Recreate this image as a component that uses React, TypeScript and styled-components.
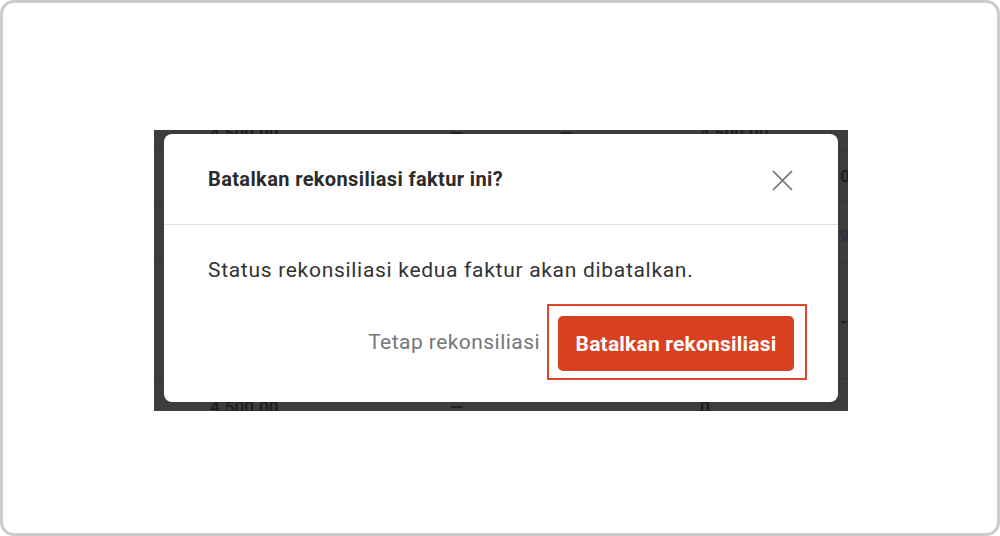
import React from 'react';
import styled, { createGlobalStyle } from 'styled-components';

const GlobalStyle = createGlobalStyle`
  html, body {
    margin: 0;
    padding: 0;
    background: #fff;
  }
  body {
    font-family: Roboto, "Liberation Sans", Arial, sans-serif;
  }
`;

const Frame = styled.div`
  box-sizing: border-box;
  width: 1000px;
  height: 536px;
  border: 3px solid #cbcbcb;
  border-radius: 14px;
  background: #fff;
  display: flex;
  justify-content: center;
  align-items: flex-start;
  padding: 127px 0 0 2px;
`;

const Shot = styled.div`
  position: relative;
  width: 694px;
  height: 281px;
  background: #3d3d3d;
  overflow: hidden;
`;

const BgTable = styled.div`
  display: flex;
  flex-direction: column;
  margin-top: -14px;
`;

const BgRow = styled.div<{ $h: number }>`
  display: grid;
  grid-template-columns: 56px 240px 110px 140px 148px;
  height: ${(p) => p.$h}px;
  align-items: center;
  border-bottom: 1px solid #353535;
  font-size: 17px;
  font-weight: 700;
`;

const BgCell = styled.span<{ $muted?: boolean }>`
  color: ${(p) => (p.$muted ? '#2a3140' : '#1f1f1f')};
  white-space: nowrap;
`;

const EdgeCell = styled(BgCell)`
  padding-left: 140px;
`;

const Modal = styled.div`
  position: absolute;
  top: 4px;
  left: 10px;
  width: 674px;
  height: 268px;
  background: #fff;
  border-radius: 8px;
  display: flex;
  flex-direction: column;
`;

const Header = styled.div`
  height: 90px;
  padding: 0 45px 0 44px;
  display: flex;
  align-items: center;
  justify-content: space-between;
  border-bottom: 1px solid #e3e3e3;
`;

const Title = styled.h2`
  margin: 0;
  font-size: 20px;
  font-weight: 700;
  color: #2b2b2b;
  letter-spacing: 0.37px;
`;

const CloseButton = styled.button`
  border: none;
  background: none;
  padding: 0;
  width: 22px;
  height: 22px;
  display: flex;
  align-items: center;
  justify-content: center;
  cursor: pointer;
  margin-top: 2px;
`;

const Body = styled.div`
  padding: 33px 44px 22px;
  display: flex;
  flex-direction: column;
  gap: 22px;
`;

const Message = styled.p`
  margin: 0;
  font-size: 21px;
  line-height: 24px;
  color: #333;
  letter-spacing: 0.7px;
`;

const Footer = styled.div`
  display: flex;
  justify-content: flex-end;
  align-items: center;
  gap: 7px;
  margin-right: -13px;
`;

const GhostButton = styled.button`
  border: none;
  background: none;
  padding: 0;
  font-family: inherit;
  font-size: 21px;
  color: #777;
  letter-spacing: 0.45px;
  cursor: pointer;
`;

const Highlight = styled.div`
  border: 2px solid #e2462a;
  padding: 10px 11px 7px 9px;
  display: flex;
`;

const DangerButton = styled.button`
  width: 236px;
  height: 55px;
  border: none;
  border-radius: 5px;
  background: #d9401f;
  color: #fff;
  font-family: inherit;
  font-size: 21px;
  font-weight: 700;
  letter-spacing: 0.2px;
  cursor: pointer;
`;

const CloseIcon = () => (
  <svg width="21" height="21" viewBox="0 0 21 21" fill="none">
    <path d="M1 1 20 20M20 1 1 20" stroke="#6f6f6f" strokeWidth="1.7" />
  </svg>
);

const App: React.FC = () => (
  <>
    <GlobalStyle />
    <Frame>
      <Shot>
        <BgTable>
          <BgRow $h={34}>
            <BgCell />
            <BgCell>4.500.00</BgCell>
            <BgCell>—</BgCell>
            <BgCell>—</BgCell>
            <BgCell>4.500.00</BgCell>
          </BgRow>
          <BgRow $h={50}>
            <BgCell />
            <BgCell />
            <BgCell />
            <BgCell />
            <EdgeCell>0.</EdgeCell>
          </BgRow>
          <BgRow $h={60}>
            <BgCell />
            <BgCell />
            <BgCell />
            <BgCell />
            <EdgeCell $muted>g</EdgeCell>
          </BgRow>
          <BgRow $h={115}>
            <BgCell />
            <BgCell />
            <BgCell />
            <BgCell />
            <EdgeCell>-0</EdgeCell>
          </BgRow>
          <BgRow $h={56}>
            <BgCell />
            <BgCell>4.500.00</BgCell>
            <BgCell>—</BgCell>
            <BgCell />
            <BgCell>0</BgCell>
          </BgRow>
        </BgTable>
        <Modal role="dialog" aria-modal="true">
          <Header>
            <Title>Batalkan rekonsiliasi faktur ini?</Title>
            <CloseButton aria-label="Tutup">
              <CloseIcon />
            </CloseButton>
          </Header>
          <Body>
            <Message>Status rekonsiliasi kedua faktur akan dibatalkan.</Message>
            <Footer>
              <GhostButton>Tetap rekonsiliasi</GhostButton>
              <Highlight>
                <DangerButton>Batalkan rekonsiliasi</DangerButton>
              </Highlight>
            </Footer>
          </Body>
        </Modal>
      </Shot>
    </Frame>
  </>
);

export default App;
